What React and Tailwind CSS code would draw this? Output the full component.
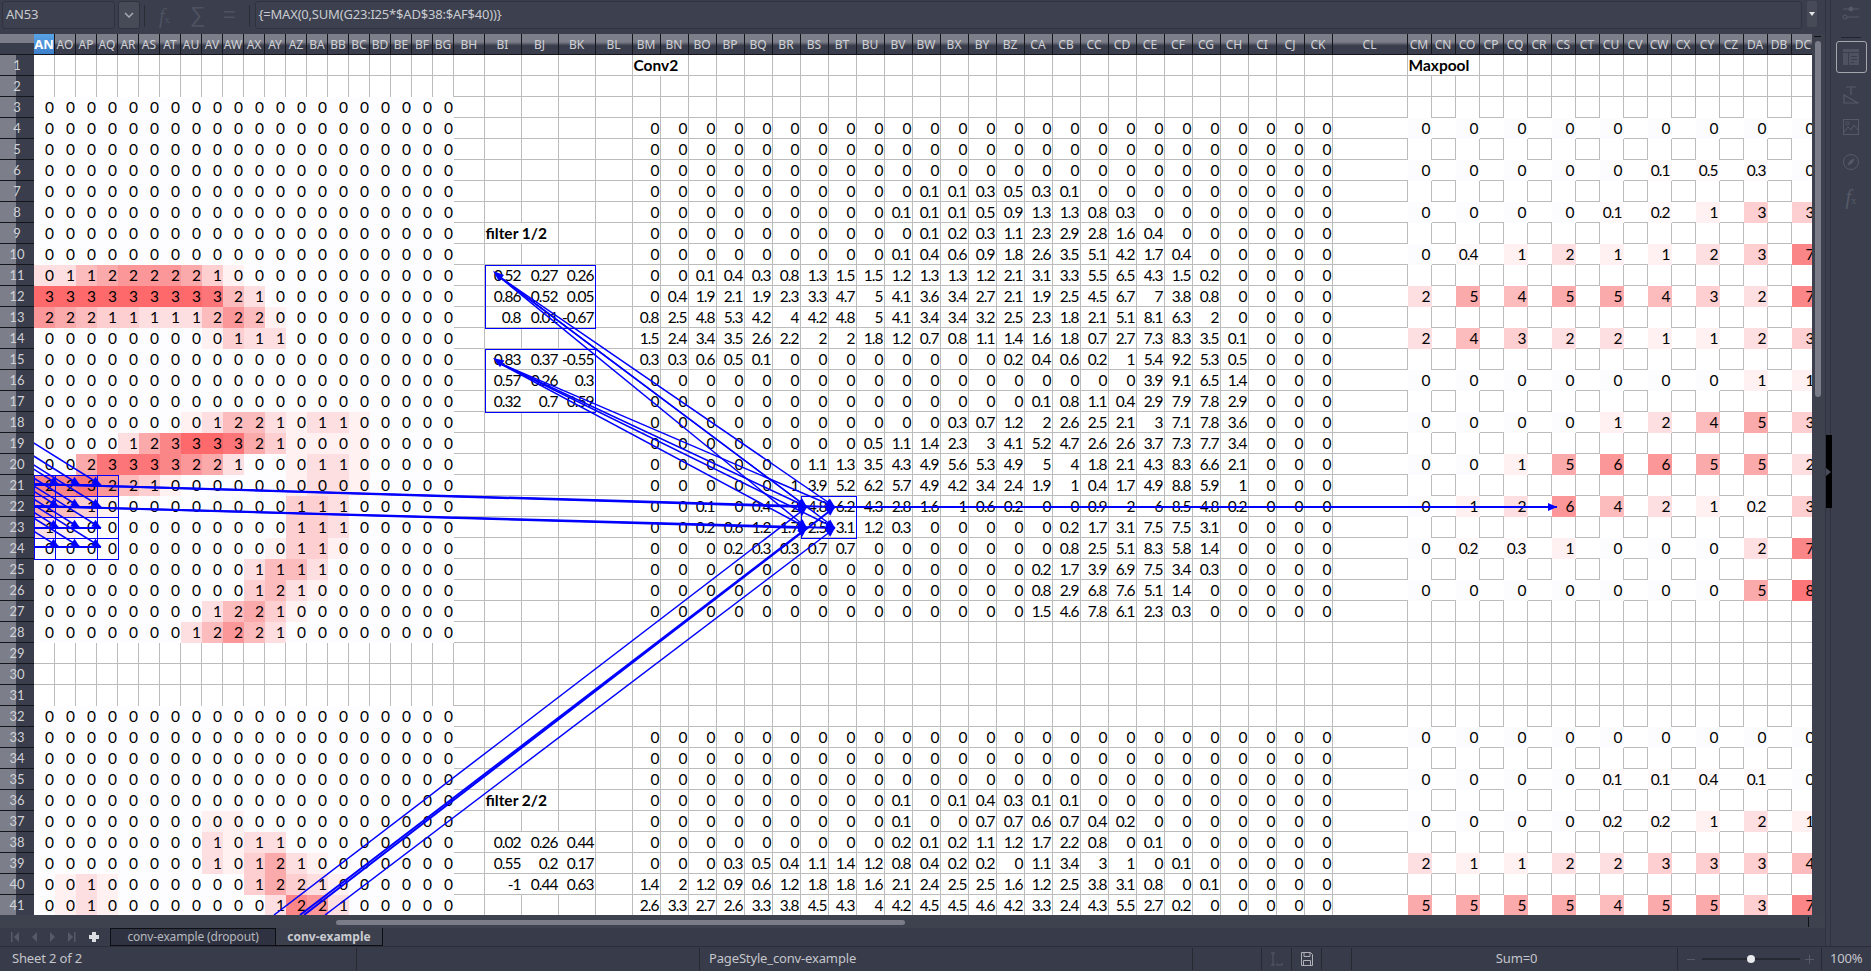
import React from "react";

// column widths live in the grid template, this is just the labels
const colName = (i) => {
  let n = 40 + i;
  let s = "";
  while (n > 0) {
    const m = (n - 1) % 26;
    s = String.fromCharCode(65 + m) + s;
    n = Math.floor((n - 1) / 26);
  }
  return s;
};
const COL_COUNT = 68;

const HEAT = [
  "bg-[#fdfdff]", "bg-[#fff0f2]", "bg-[#fddfe1]", "bg-[#fdcfd1]", "bg-[#fcbcbe]",
  "bg-[#fbaaac]", "bg-[#fb9799]", "bg-[#fb8688]", "bg-[#fc7578]", "bg-[#fe6a6c]",
];

const LEFT_VALS = {
  11: "01122222100000000000", 12: "33333333321000000000", 13: "22211111222000000000",
  14: "00000000011100000000", 18: "00000000122101100000", 19: "00001233332100000000",
  20: "00233332210001100000", 21: "22322100000000000000", 22: "22100000000011100000",
  23: "10000000000011100000", 24: "00000000000011000000", 25: "00000000001111000000",
  26: "00000000001210000000", 27: "00000000122100000000", 28: "00000001222100000000",
  38: "00000000101100000000", 39: "00000000101210000000", 40: "00100000001221000000",
  41: "00100000000122100000",
};

const LEFT_HEAT = {
  11: "22456665310000000000", 12: "99999999842000000000", 13: "65433222464100000000",
  14: "00000000132200000000", 18: "00000001244212210000", 19: "00002579985311110000",
  20: "00588876520012210000", 21: "77864310000012210000", 22: "54310000000033200000",
  23: "21000000000033200000", 24: "00000000000133100000", 25: "00000000002442000000",
  26: "00000000003421000000", 27: "00000000245310000000", 28: "00000002464200000000",
  37: "00000000110000000000", 38: "00000000212200000000", 39: "00000000213521000000",
  40: "01210000003532100000", 41: "01210000000276200000",
};

const z = (n) => "0 ".repeat(n);
const CONV = {
  7: z(10) + "0.1 0.1 0.3 0.5 0.3 0.1",
  8: z(9) + "0.1 0.1 0.1 0.5 0.9 1.3 1.3 0.8 0.3",
  9: z(10) + "0.1 0.2 0.3 1.1 2.3 2.9 2.8 1.6 0.4",
  10: z(9) + "0.1 0.4 0.6 0.9 1.8 2.6 3.5 5.1 4.2 1.7 0.4",
  11: "0 0 0.1 0.4 0.3 0.8 1.3 1.5 1.5 1.2 1.3 1.3 1.2 2.1 3.1 3.3 5.5 6.5 4.3 1.5 0.2",
  12: "0 0.4 1.9 2.1 1.9 2.3 3.3 4.7 5 4.1 3.6 3.4 2.7 2.1 1.9 2.5 4.5 6.7 7 3.8 0.8",
  13: "0.8 2.5 4.8 5.3 4.2 4 4.2 4.8 5 4.1 3.4 3.4 3.2 2.5 2.3 1.8 2.1 5.1 8.1 6.3 2",
  14: "1.5 2.4 3.4 3.5 2.6 2.2 2 2 1.8 1.2 0.7 0.8 1.1 1.4 1.6 1.8 0.7 2.7 7.3 8.3 3.5 0.1",
  15: "0.3 0.3 0.6 0.5 0.1 0 0 0 0 0 0 0 0 0.2 0.4 0.6 0.2 1 5.4 9.2 5.3 0.5",
  16: z(18) + "3.9 9.1 6.5 1.4",
  17: z(14) + "0.1 0.8 1.1 0.4 2.9 7.9 7.8 2.9",
  18: z(11) + "0.3 0.7 1.2 2 2.6 2.5 2.1 3 7.1 7.8 3.6",
  19: z(8) + "0.5 1.1 1.4 2.3 3 4.1 5.2 4.7 2.6 2.6 3.7 7.3 7.7 3.4",
  20: z(6) + "1.1 1.3 3.5 4.3 4.9 5.6 5.3 4.9 5 4 1.8 2.1 4.3 8.3 6.6 2.1",
  21: "0 0 0 0 0 1 3.9 5.2 6.2 5.7 4.9 4.2 3.4 2.4 1.9 1 0.4 1.7 4.9 8.8 5.9 1",
  22: "0 0 0.1 0 0.4 2 4.8 6.2 4.3 2.8 1.6 1 0.6 0.2 0 0 0.9 2 6 8.5 4.8 0.2",
  23: "0 0 0.2 0.6 1.2 1.7 2.5 3.1 1.2 0.3 0 0 0 0 0 0.2 1.7 3.1 7.5 7.5 3.1",
  24: "0 0 0 0.2 0.3 0.3 0.7 0.7 0 0 0 0 0 0 0 0.8 2.5 5.1 8.3 5.8 1.4",
  25: z(14) + "0.2 1.7 3.9 6.9 7.5 3.4 0.3",
  26: z(14) + "0.8 2.9 6.8 7.6 5.1 1.4",
  27: z(14) + "1.5 4.6 7.8 6.1 2.3 0.3",
  36: z(9) + "0.1 0 0.1 0.4 0.3 0.1 0.1",
  37: z(9) + "0.1 0 0 0.7 0.7 0.6 0.7 0.4 0.2",
  38: z(9) + "0.2 0.1 0.2 1.1 1.2 1.7 2.2 0.8 0 0.1",
  39: "0 0 0 0.3 0.5 0.4 1.1 1.4 1.2 0.8 0.4 0.2 0.2 0 1.1 3.4 3 1 0 0.1",
  40: "1.4 2 1.2 0.9 0.6 1.2 1.8 1.8 1.6 2.1 2.4 2.5 2.5 1.6 1.2 2.5 3.8 3.1 0.8 0 0.1",
  41: "2.6 3.3 2.7 2.6 3.3 3.8 4.5 4.3 4 4.2 4.5 4.5 4.6 4.2 3.3 2.4 4.3 5.5 2.7 0.2",
};

const POOL = {
  4: "0 0 0 0 0 0 0 0 0",
  6: "0 0 0 0 0 0.1 0.5 0.3 0",
  8: "0 0 0 0 0.1 0.2 1 3 3",
  10: "0 0.4 1 2 1 1 2 3 7",
  12: "2 5 4 5 5 4 3 2 7",
  14: "2 4 3 2 2 1 1 2 3",
  16: "0 0 0 0 0 0 0 1 1",
  18: "0 0 0 0 1 2 4 5 3",
  20: "0 0 1 5 6 6 5 5 2",
  22: "0 1 2 6 4 2 1 0.2 3",
  24: "0 0.2 0.3 1 0 0 0 2 7",
  26: "0 0 0 0 0 0 0 5 8",
  33: "0 0 0 0 0 0 0 0 0",
  35: "0 0 0 0 0.1 0.1 0.4 0.1 0",
  37: "0 0 0 0 0.2 0.2 1 2 1",
  39: "2 1 1 2 2 3 3 3 4",
  41: "5 5 5 5 4 5 5 3 7",
};

const FILTERS = {
  11: ["0.52", "0.27", "0.26"], 12: ["0.86", "0.52", "0.05"], 13: ["0.8", "0.01", "-0.67"],
  15: ["0.83", "0.37", "-0.55"], 16: ["0.57", "0.26", "0.3"], 17: ["0.32", "0.7", "0.59"],
  38: ["0.02", "0.26", "0.44"], 39: ["0.55", "0.2", "0.17"], 40: ["-1", "0.44", "0.63"],
};

const isHeatRow = (r) => (r >= 3 && r <= 28) || r >= 32;
const isConvRow = (r) => (r >= 4 && r <= 27) || r >= 33;
const isPoolRow = (r) => POOL[r] !== undefined;
const isPoolCol = (c) => c >= 51 && (c - 51) % 2 === 0;

const BOTH = "border-b border-r border-[#bcbcbc]";
const BOTTOM = "border-b border-[#bcbcbc]";
const RIGHT = "border-r border-[#bcbcbc]";

const poolHeat = (v) => {
  if (v === 0) return "bg-[#fcfcff]";
  if (v < 1) return "bg-[#fdf8fa]";
  return HEAT[Math.min(v, 9)];
};

function buildCells() {
  const out = [];
  const label = "pl-[1px] font-bold tracking-normal whitespace-nowrap";
  for (let r = 1; r <= 41; r++) {
    out.push(
      <div
        key={`h${r}`}
        className="flex items-center justify-center border-b border-[#14161c] bg-[linear-gradient(to_right,#7c7f89_46%,#3a3d4b_46%)] text-[13px] tracking-normal text-[#d0d2d7]"
      >
        {r}
      </div>
    );
    for (let c = 0; c < COL_COUNT; c++) {
      const key = `${r}-${c}`;
      if (c < 20) {
        if (isHeatRow(r)) {
          const v = LEFT_VALS[r] ? LEFT_VALS[r][c] : "0";
          const h = LEFT_HEAT[r] ? Number(LEFT_HEAT[r][c]) : 0;
          out.push(<div key={key} className={`text-right pr-[2px] ${HEAT[h]}`}>{v}</div>);
        } else {
          out.push(<div key={key} className={isHeatRow(r + 1) ? RIGHT : BOTH} />);
        }
      } else if (c >= 21 && c <= 23 && FILTERS[r]) {
        const border = c === 23 ? BOTH : BOTTOM;
        out.push(<div key={key} className={`text-right pr-[1px] ${border}`}>{FILTERS[r][c - 21]}</div>);
      } else if ((r === 9 || r === 36) && c === 21) {
        out.push(
          <div key={key} className={`col-span-2 ${label} ${BOTH}`}>
            {r === 9 ? "filter 1/2" : "filter 2/2"}
          </div>
        );
        c += 1;
      } else if (r === 1 && c === 25) {
        out.push(<div key={key} className={`col-span-2 ${label} ${BOTH}`}>Conv2</div>);
        c += 1;
      } else if (r === 1 && c === 51) {
        out.push(<div key={key} className={`col-span-3 ${label} ${BOTH}`}>Maxpool</div>);
        c += 2;
      } else if (c >= 25 && c <= 49 && isConvRow(r)) {
        const vals = (CONV[r] || "").trim().split(" ").filter(Boolean);
        out.push(<div key={key} className={`text-right pr-[1px] ${BOTH}`}>{vals[c - 25] ?? "0"}</div>);
      } else if (c === 50) {
        out.push(<div key={key} className={isPoolRow(r) ? BOTTOM : BOTH} />);
      } else if (c >= 51) {
        if (isPoolRow(r)) {
          if (isPoolCol(c)) {
            const s = POOL[r].split(" ")[(c - 51) / 2];
            out.push(<div key={key} className={`text-right pr-[2px] ${poolHeat(Number(s))}`}>{s}</div>);
          } else {
            out.push(<div key={key} className={BOTTOM} />);
          }
        } else {
          const hideBottom = isPoolCol(c) && isPoolRow(r + 1);
          out.push(<div key={key} className={hideBottom ? RIGHT : BOTH} />);
        }
      } else {
        out.push(<div key={key} className={BOTH} />);
      }
    }
  }
  return out;
}

const BLUE = "#0000ff";
const TIPS = [[807, 507], [835, 507], [807, 528], [835, 528]];

const Head = ({ x1, y1, x2, y2, len = 9, half = 4 }) => {
  const a = Math.atan2(y2 - y1, x2 - x1);
  const bx = x2 - len * Math.cos(a);
  const by = y2 - len * Math.sin(a);
  const px = half * Math.sin(a);
  const py = half * Math.cos(a);
  return <polygon points={`${x2},${y2} ${bx + px},${by - py} ${bx - px},${by + py}`} fill={BLUE} />;
};

const Arrow = ({ x1, y1, x2, y2, w = 1.5 }) => (
  <g>
    <line x1={x1} y1={y1} x2={x2} y2={y2} stroke={BLUE} strokeWidth={w} />
    <Head x1={x1} y1={y1} x2={x2} y2={y2} />
  </g>
);

function Arrows() {
  const inputHeads = [];
  [485, 507, 528, 547].forEach((y) => {
    [59, 80, 101].forEach((x) => {
      inputHeads.push(<Arrow key={`${x}-${y}`} x1={x - 80} y1={y - 50} x2={x} y2={y} />);
    });
    inputHeads.push(<line key={`h${y}`} x1={34} y1={y} x2={101} y2={y} stroke={BLUE} strokeWidth={2} />);
  });
  return (
    <svg
      className="absolute left-[34px] top-[21px] pointer-events-none"
      width="1778"
      height="860"
      viewBox="34 55 1778 860"
    >
      <g fill="none" stroke={BLUE} strokeWidth="1">
        <rect x="485.5" y="265.5" width="110" height="63" />
        <rect x="485.5" y="349.5" width="110" height="63" />
        <rect x="801.5" y="496.5" width="55" height="42" />
        <rect x="34.5" y="475.5" width="63" height="63" />
        <rect x="55.5" y="475.5" width="63" height="63" />
        <rect x="34.5" y="496.5" width="63" height="63" />
        <rect x="55.5" y="496.5" width="63" height="63" />
        <line x1="34" y1="517.5" x2="118" y2="517.5" />
      </g>
      {TIPS.map(([x, y]) => (
        <g key={`${x}${y}`}>
          <Arrow x1={497} y1={275} x2={x} y2={y} />
          <Arrow x1={497} y1={362} x2={x} y2={y} />
          <Arrow x1={34} y1={y === 507 ? 484 : 506} x2={x} y2={y} w={2} />
        </g>
      ))}
      <Head x1={510} y1={285} x2={493} y2={271} len={11} half={4} />
      <Head x1={510} y1={369} x2={493} y2={358} len={11} half={4} />
      <Arrow x1={274} y1={915} x2={807} y2={507} />
      <Arrow x1={304} y1={915} x2={835} y2={507} w={2} />
      <Arrow x1={300} y1={915} x2={807} y2={528} w={2} />
      <Arrow x1={325} y1={915} x2={835} y2={528} />
      {inputHeads}
      <Arrow x1={835} y1={507} x2={1557} y2={507} w={2} />
    </svg>
  );
}

const NavIcons = () => (
  <svg width="80" height="14" viewBox="0 0 80 14" className="ml-[9px]" fill="#565a68">
    <rect x="2" y="2" width="1.5" height="10" />
    <path d="M10 2v10l-5-5z" />
    <path d="M28 2v10l-5-5z" />
    <path d="M41 2v10l5-5z" />
    <path d="M59 2v10l5-5z" />
    <rect x="65" y="2" width="1.5" height="10" />
  </svg>
);

function SidebarIcons() {
  return (
    <div className="flex w-[40px] flex-col items-center text-[#565a68]">
      <svg width="18" height="18" viewBox="0 0 18 18" fill="none" stroke="currentColor" strokeWidth="1" className="mt-[4px]">
        <path d="M1 5h16M1 13h16" />
        <circle cx="9" cy="5" r="2" fill="currentColor" />
        <circle cx="3" cy="13" r="2" fill="#3b3e4c" />
      </svg>
      <div className="mt-[15px] h-px w-[20px] bg-[#23252e]" />
      <div className="mt-[3px] flex h-[32px] w-[31px] items-center justify-center rounded-[3px] border border-[#a4a6ac]">
        <svg width="16" height="16" viewBox="0 0 16 16" fill="currentColor">
          <path d="M0 0h16v3H0zM0 4h5v12H0zM6 4h10v12H6z" fillOpacity="0.75" />
          <path d="M8 7h6v1H8zM8 10h6v1H8zM8 13h3v1H8z" fill="#3b3e4c" />
        </svg>
      </div>
      <svg width="16" height="18" viewBox="0 0 16 18" fill="none" stroke="currentColor" strokeWidth="1.2" className="mt-[13px]">
        <path d="M3 1h10M8 1v8M1 17h14L1 9z" />
      </svg>
      <svg width="16" height="16" viewBox="0 0 16 16" fill="none" stroke="currentColor" className="mt-[15px]">
        <rect x="0.5" y="0.5" width="15" height="15" />
        <path d="M1 13l4-5 3 3 3-5 4 5" />
        <circle cx="4.5" cy="4.5" r="1.5" />
      </svg>
      <svg width="16" height="16" viewBox="0 0 16 16" fill="none" stroke="currentColor" className="mt-[19px]">
        <circle cx="8" cy="8" r="7.5" />
        <path d="M11 5L9 9 5 11l2-4z" fill="currentColor" />
      </svg>
      <div className="mt-[17px] font-['Liberation_Serif',serif] text-[20px] italic leading-[20px]">
        f<span className="text-[11px] not-italic">x</span>
      </div>
    </div>
  );
}

const Sep = () => <div className="h-[22px] w-px shrink-0 bg-[#262832]" />;

export default function App() {
  const cells = buildCells();
  return (
    <div className="flex h-[971px] w-[1871px] flex-col overflow-hidden bg-[#3b3f4d] font-['Noto_Sans',sans-serif]">
      <div className="flex h-[946px]">
        <div className="flex w-[1825px] flex-col">
          {/* formula bar */}
          <div className="flex h-[34px] items-start pt-[1px] text-[13px] text-[#c9cbd1]">
            <div className="ml-[2px] flex h-[28px] w-[113px] items-center rounded-[3px] border border-[#30333e] bg-[#3d414f] pl-[3px] tracking-[-0.2px]">AN53</div>
            <div className="ml-[3px] flex h-[28px] w-[22px] items-center justify-center rounded-[3px] border border-[#30333e] bg-[#474b58]">
              <svg width="10" height="6" viewBox="0 0 10 6" fill="none" stroke="#a8aab0" strokeWidth="1.5">
                <path d="M1 1l4 4 4-4" />
              </svg>
            </div>
            <div className="ml-[4px] mt-[4px] h-[22px] w-px bg-[#2a2c36]" />
            <div className="ml-[14px] mt-[3px] w-[22px] font-['Liberation_Serif',serif] text-[20px] italic leading-[24px] text-[#4e5260]">
              f<span className="text-[11px] not-italic">x</span>
            </div>
            <div className="ml-[9px] mt-[2px] font-['Liberation_Sans',sans-serif] text-[22px] leading-[24px] text-[#4e5260]">∑</div>
            <div className="ml-[17px] mt-[2px] font-['Liberation_Sans',sans-serif] text-[22px] leading-[24px] text-[#4e5260]">=</div>
            <div className="ml-[13px] mt-[4px] h-[22px] w-px bg-[#2a2c36]" />
            <div className="ml-[5px] flex h-[28px] w-[1547px] items-center rounded-[3px] border border-[#30333e] bg-[#3d414f] pl-[3px] tracking-[-0.2px]">
              {"{=MAX(0,SUM(G23:I25*$AD$38:$AF$40))}"}
            </div>
            <div className="ml-[5px] flex h-[26px] w-[10px] items-center justify-center rounded-[2px] bg-[#474b58]">
              <svg width="6" height="4" viewBox="0 0 6 4" fill="#e4e5e8">
                <path d="M0 0h6L3 4z" />
              </svg>
            </div>
          </div>

          {/* sheet */}
          <div className="flex h-[881px]">
            <div className="relative w-[1812px] overflow-hidden bg-white">
              <div className="grid w-max grid-cols-[34px_repeat(20,21px)_30.5px_repeat(4,37px)_repeat(25,28px)_75px_repeat(17,24px)] auto-rows-[21px] font-['Lato',sans-serif] text-[15.5px] leading-[21px] tracking-[-1px] text-black">
                <div className="border-b border-[#14161c] bg-[linear-gradient(#7c7f89_45%,#3a3d4b_45%)]" />
                {Array.from({ length: COL_COUNT }, (_, i) => (
                  <div
                    key={i}
                    className={
                      i === 0
                        ? "flex items-center justify-center border-b border-r border-[#14161c] bg-[linear-gradient(#5aa3e6,#3d80cc)] font-['Noto_Sans',sans-serif] text-[13px] font-bold tracking-normal text-white"
                        : "flex items-center justify-center overflow-hidden border-b border-r border-[#14161c] bg-[linear-gradient(#7c7f89_40%,#3a3d4b_58%)] font-['Noto_Sans',sans-serif] text-[12px] tracking-normal text-[#d0d2d7]"
                    }
                  >
                    {colName(i)}
                  </div>
                ))}
                {cells}
              </div>
              <Arrows />
            </div>
            <div className="relative w-[13px] bg-[#3d414e]">
              <div className="absolute left-[3px] top-[7px] h-[356px] w-[6px] rounded-[3px] bg-[#7a7d88]" />
              <div className="absolute left-[2px] top-[2px] h-px w-[7px] bg-[#101116]" />
            </div>
          </div>

          {/* horizontal scrollbar */}
          <div className="relative h-[13px] bg-[#3e424e]">
            <div className="absolute left-[336px] top-[5px] h-[5px] w-[569px] rounded-[3px] bg-[#7a7d88]" />
            <div className="absolute left-[1808px] top-[2px] h-[10px] w-[1px] bg-[#101116]" />
          </div>

          {/* sheet tabs */}
          <div className="flex h-[18px] items-center bg-[#383b49] text-[12px]">
            <NavIcons />
            <svg width="12" height="12" viewBox="0 0 12 12" fill="#dcdde1" className="ml-[-1px]">
              <path d="M4 1h4v3h3v4H8v3H4V8H1V4h3z" />
            </svg>
            <div className="ml-[10px] flex h-[18px] w-[166px] items-center justify-center border border-[#0e0f13] bg-[#2f3240] tracking-[-0.15px] text-[#b6b8be]">
              conv-example (dropout)
            </div>
            <div className="flex h-[18px] w-[107px] items-center justify-center border-r border-[#0e0f13] border-b bg-[#3c404d] font-bold text-[#c9cbd1]">
              conv-example
            </div>
          </div>
        </div>

        {/* sidebar */}
        <div className="flex w-[46px]">
          <div className="relative w-[6px] border-x border-[#30323d]">
            <div className="absolute left-0 top-[435px] flex h-[73px] w-[6px] items-center bg-black">
              <svg width="5" height="8" viewBox="0 0 5 8" fill="#4a4d59">
                <path d="M0 0l5 4-5 4z" />
              </svg>
            </div>
          </div>
          <SidebarIcons />
        </div>
      </div>

      {/* status bar */}
      <div className="flex h-[25px] items-center border-t border-[#2b2d38] bg-[#383b49] text-[13px] tracking-[-0.15px] text-[#c4c6cc]">
        <div className="w-[356px] pl-[12px]">Sheet 2 of 2</div>
        <Sep />
        <div className="w-[342px]" />
        <Sep />
        <div className="w-[492px] pl-[9px]">PageStyle_conv-example</div>
        <Sep />
        <div className="w-[68px]" />
        <Sep />
        <div className="flex w-[29px] justify-center">
          <svg width="14" height="14" viewBox="0 0 14 14" fill="none" stroke="#565a68">
            <path d="M1 1h4M3 1v12M1 13h4M7 11v2h5v-2" />
          </svg>
        </div>
        <Sep />
        <div className="flex w-[29px] justify-center">
          <svg width="12" height="14" viewBox="0 0 12 14" fill="none" stroke="#b0b2b8">
            <path d="M.5.5h9l2 2v11H.5zM3 .5v4h6v-4M2.5 13.5v-5h7v5" />
          </svg>
        </div>
        <Sep />
        <div className="w-[29px]" />
        <Sep />
        <div className="w-[325px] pl-[4px] text-center">Sum=0</div>
        <Sep />
        <div className="flex w-[143px] items-center">
          <div className="ml-[9px] h-px w-[8px] bg-[#565a68]" />
          <div className="relative ml-[7px] h-[2px] w-[98px] bg-[#262832]">
            <div className="absolute left-[45px] top-[-3px] h-[8px] w-[8px] rounded-full bg-[#e8e9ec]" />
          </div>
          <div className="relative ml-[5px] h-px w-[9px] bg-[#565a68]">
            <div className="absolute left-[4px] top-[-4px] h-[9px] w-px bg-[#565a68]" />
          </div>
        </div>
        <Sep />
        <div className="ml-[8px]">100%</div>
      </div>
    </div>
  );
}
